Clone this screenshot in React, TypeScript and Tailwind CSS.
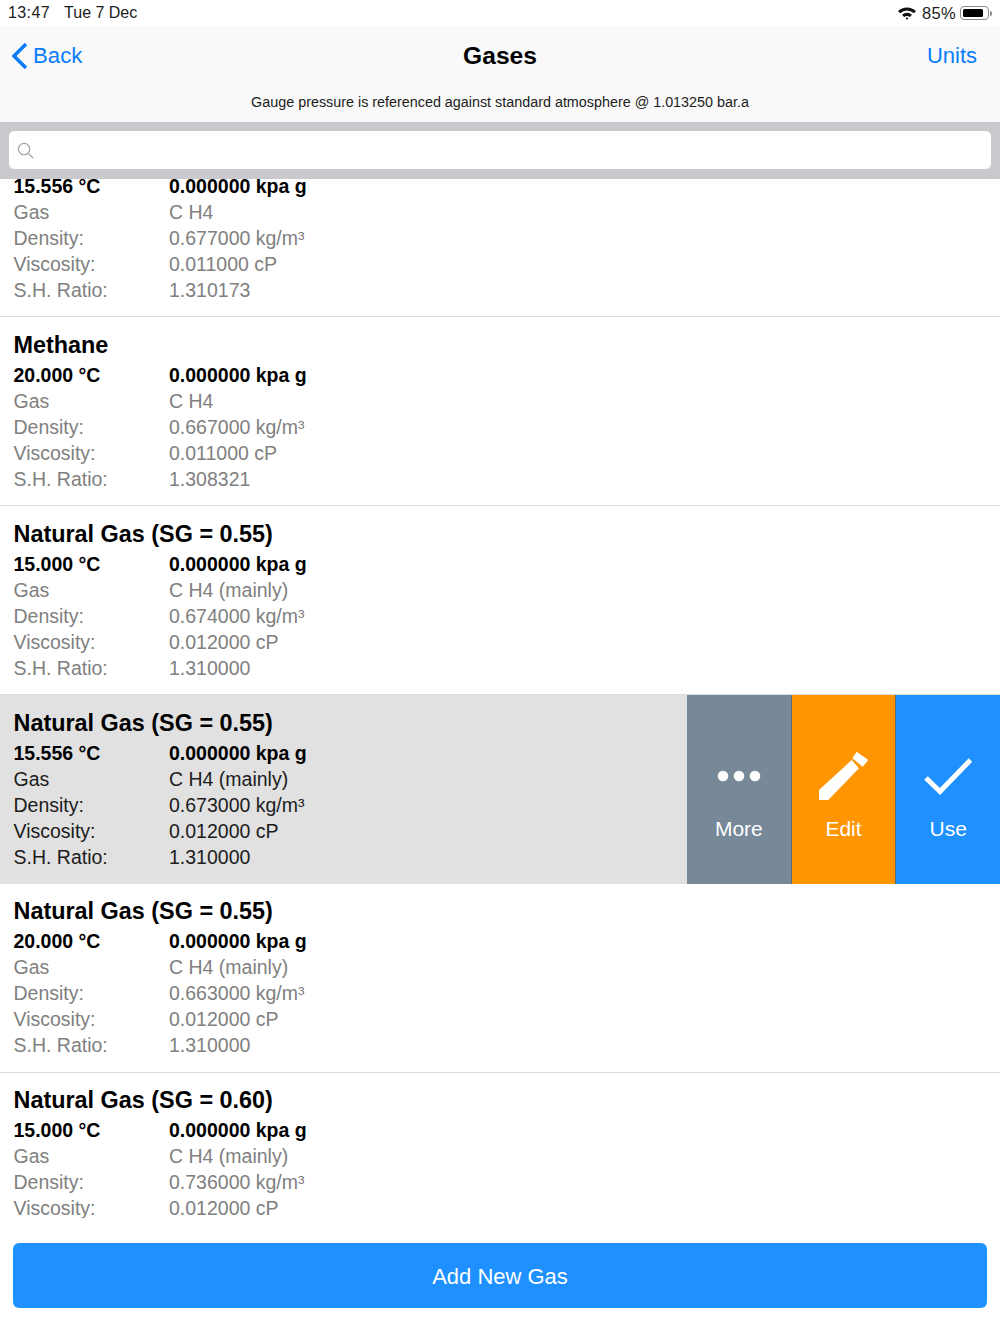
const font = "font-['Liberation_Sans',Arial,sans-serif]";

type Gas = { title?: string; temp: string; kind: string; density: string; visc: string; ratio: string; selected?: boolean; tight?: boolean };

const gases: Gas[] = [
  { title: "Methane", temp: "15.556 °C", kind: "C H4", density: "0.677000 kg/m³", visc: "0.011000 cP", ratio: "1.310173" },
  { title: "Methane", temp: "20.000 °C", kind: "C H4", density: "0.667000 kg/m³", visc: "0.011000 cP", ratio: "1.308321" },
  { title: "Natural Gas (SG = 0.55)", temp: "15.000 °C", kind: "C H4 (mainly)", density: "0.674000 kg/m³", visc: "0.012000 cP", ratio: "1.310000" },
  { title: "Natural Gas (SG = 0.55)", temp: "15.556 °C", kind: "C H4 (mainly)", density: "0.673000 kg/m³", visc: "0.012000 cP", ratio: "1.310000", selected: true },
  { title: "Natural Gas (SG = 0.55)", temp: "20.000 °C", kind: "C H4 (mainly)", density: "0.663000 kg/m³", visc: "0.012000 cP", ratio: "1.310000", tight: true },
  { title: "Natural Gas (SG = 0.60)", temp: "15.000 °C", kind: "C H4 (mainly)", density: "0.736000 kg/m³", visc: "0.012000 cP", ratio: "1.310000", tight: true },
];

function Row({ g }: { g: Gas }) {
  const tone = g.selected ? "text-[#1c1c1c]" : "text-[#808080]";
  const lines: [string, string][] = [
    ["Gas", g.kind],
    ["Density:", g.density],
    ["Viscosity:", g.visc],
    ["S.H. Ratio:", g.ratio],
  ];
  return (
    <div className={`flex shrink-0 border-b border-[#dedede] ${g.selected ? "h-[188.5px] bg-[#e1e1e1]" : "h-[189px] bg-white"}`}>
      <div className={`flex-1 pl-[13.5px] ${g.tight ? "pt-[13px]" : "pt-[14px]"}`}>
        <div className="h-[28px] text-[23.4px] leading-[28px] font-bold text-black mb-[3px]">{g.title}</div>
        <div className="grid grid-cols-[155.5px_1fr] text-[19.5px] leading-[26px]">
          <div className="font-bold text-black">{g.temp}</div>
          <div className="font-bold text-black">0.000000 kpa g</div>
          {lines.map(([a, b]) => (
            <div key={a} className="contents">
              <div className={tone}>{a}</div>
              <div className={tone}>{b}</div>
            </div>
          ))}
        </div>
      </div>
      {g.selected && (
        <div className="flex w-[313px] text-white text-[21px] leading-[26px] -mb-px">
          <div className="flex-1 bg-[#778899] flex flex-col items-center">
            <svg className="mt-[68px]" width="46" height="26" viewBox="0 0 46 26" fill="white">
              <circle cx="7" cy="13" r="5.3" />
              <circle cx="23" cy="13" r="5.3" />
              <circle cx="39" cy="13" r="5.3" />
            </svg>
            <div className="mt-[27px]">More</div>
          </div>
          <div className="flex-1 bg-[#ff9500] border-l border-[#5c6a78] flex flex-col items-center">
            <svg className="mt-[56px]" width="50" height="50" viewBox="0 0 50 50" fill="white">
              <path d="M0 49 L0 39 L32.7 9 L40 17.3 L9.3 49 Z" />
              <path d="M37.7 0.7 L49.3 9 L43.7 15.7 L33.3 7.3 Z" />
            </svg>
            <div className="mt-[15px]">Edit</div>
          </div>
          <div className="flex-1 bg-[#1e90ff] border-l border-[#5c6a78] flex flex-col items-center">
            <svg className="mt-[62px]" width="48" height="38" viewBox="0 0 48 38" fill="none" stroke="white" strokeWidth="5">
              <path d="M2 21 L16 34.5 L46.5 3" />
            </svg>
            <div className="mt-[21px]">Use</div>
          </div>
        </div>
      )}
    </div>
  );
}

export default function App() {
  return (
    <div className={`${font} w-[1000px] h-[1334px] bg-white flex flex-col overflow-hidden`}>
      {/* status bar */}
      <div className="h-[26px] shrink-0 flex items-center px-[8px] text-[16px] text-[#1c1c1c]">
        <span className="tracking-[0.4px]">13:47</span>
        <span className="ml-[14px]">Tue 7 Dec</span>
        <div className="ml-auto flex items-center">
          <svg width="20" height="14" viewBox="0 0 20 14" className="mr-[5px]">
            <path d="M1 5 A13 13 0 0 1 19 5 L16.8 7.2 A10 10 0 0 0 3.2 7.2 Z" fill="#111" />
            <path d="M5 8.8 A8 8 0 0 1 15 8.8 L12.9 11 A5 5 0 0 0 7.1 11 Z" fill="#111" />
            <path d="M8.6 12 A2.6 2.6 0 0 1 11.4 12 L10 14 Z" fill="#111" />
          </svg>
          <span className="text-[16.5px] tracking-[0.3px]">85%</span>
          <div className="ml-[4px] w-[29px] h-[14px] rounded-[4px] border border-[#8a8a8a] p-[2px]">
            <div className="h-full w-[85%] bg-black rounded-[1.5px]" />
          </div>
          <div className="ml-[1px] w-[2px] h-[5px] bg-[#8a8a8a] rounded-r-sm" />
        </div>
      </div>

      {/* nav */}
      <div className="h-[96px] shrink-0 bg-[#f9f9f9] flex flex-col">
        <div className="h-[60px] grid grid-cols-[1fr_auto_1fr] items-center px-[11px]">
          <div className="flex items-center">
            <svg width="17" height="28" viewBox="0 0 17 28" fill="none" stroke="#0a7dfb" strokeWidth="3.6">
              <path d="M15 2 L3 14 L15 26" />
            </svg>
            <span className="ml-[5px] text-[22.2px] text-[#0a7dfb]">Back</span>
          </div>
          <span className="text-center text-[24.6px] font-bold text-black">Gases</span>
          <span className="justify-self-end mr-[12px] mb-[2px] text-[22px] text-[#0a7dfb]">Units</span>
        </div>
        <div className="text-center text-[14.35px] leading-[20px] mt-[6px] text-[#1c1c1c]">
          Gauge pressure is referenced against standard atmosphere @ 1.013250 bar.a
        </div>
      </div>

      {/* search */}
      <div className="h-[57px] shrink-0 bg-[#c9c9ce] px-[9px] pt-[9px] relative z-10">
        <div className="h-[38px] bg-white rounded-[5px] flex items-center pl-[8px]">
          <svg width="17" height="17" viewBox="0 0 18 18" fill="none" stroke="#a0a0a4" strokeWidth="1.3">
            <circle cx="7.5" cy="7.5" r="6" />
            <path d="M12 12 L17 17" />
          </svg>
        </div>
      </div>

      {/* list */}
      <div className="h-[1039px] shrink-0 overflow-hidden">
        <div className="flex flex-col -mt-[51px]">
          {gases.map((g, i) => (
            <Row key={i} g={g} />
          ))}
        </div>
      </div>

      {/* add */}
      <div className="flex-1 px-[13px] pt-[25px]">
        <div className="h-[65px] bg-[#1e90ff] rounded-[6px] flex items-center justify-center text-white text-[22px] pt-[2px]">
          Add New Gas
        </div>
      </div>
    </div>
  );
}
